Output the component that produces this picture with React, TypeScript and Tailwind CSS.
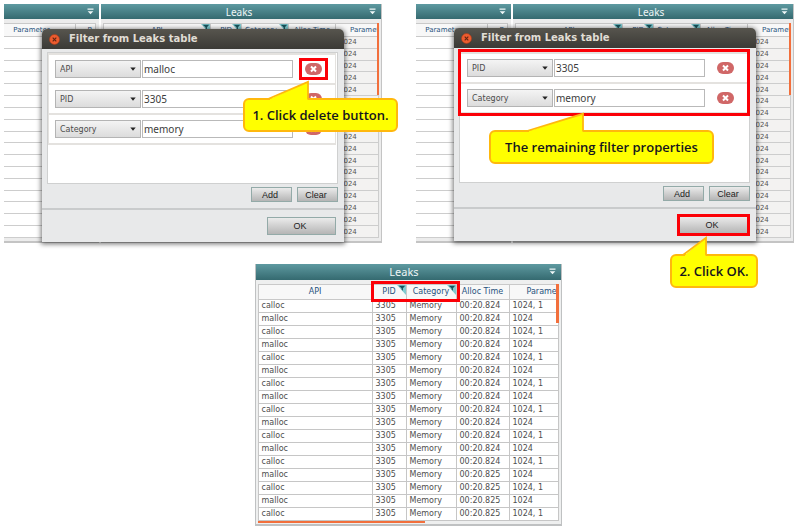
import React from "react";

type Filter = { field: string; value: string };

const ROWS = Array.from({ length: 17 }, (_, i) => ({
  api: i % 2 === 0 ? "calloc" : "malloc",
  time: i < 13 ? "00:20.824" : "00:20.825",
  parameter: i % 2 === 0 ? "1024, 1" : "1024",
}));

function MenuIcon() {
  return (
    <svg viewBox="0 0 7 7" className="h-[7px] w-[7px]" aria-hidden="true">
      <path d="M0.5 0.5h6v1.3h-6zM0.7 3.2h5.6L3.5 6.2z" fill="#eef6f6" />
    </svg>
  );
}

function FunnelMark() {
  return (
    <svg viewBox="0 0 9 10" className="absolute top-0 right-0 h-[10px] w-[9px]" aria-hidden="true">
      <path d="M0 0h9v10z" fill="#7fcad0" />
      <path d="M1.6 0.8h6.6L5.9 3.2v2.6L4.6 4.6V3.2z" fill="#17525a" />
    </svg>
  );
}

function PanelHeader({ title, small }: { title?: string; small?: boolean }) {
  return (
    <header
      className={`relative flex shrink-0 items-center justify-center bg-linear-to-b from-[#5e9aa1] to-[#356a70] font-['Noto_Sans',sans-serif] text-[#eef5f5] ${
        small ? "h-[15px] text-[10px] leading-[14px]" : "h-4 text-[11px] leading-[14px]"
      }`}
    >
      {title && <h2 className={small ? "pr-1" : "pr-2"}>{title}</h2>}
      <button type="button" aria-label="Panel menu" className="absolute top-1 right-[5px]">
        <MenuIcon />
      </button>
    </header>
  );
}

const HEAD = "relative overflow-hidden border border-[#c9c9c9] bg-[#f8f8f8] p-0 font-medium text-[#27527d]";

function BackTable() {
  return (
    <div className="flex h-[239px] gap-[2px]">
      <section className="flex w-[95px] flex-col border-b-2 border-[#c4c4c4] bg-[#ececec]">
        <PanelHeader small />
        <table className="mt-1 mr-[3px] h-[215px] table-fixed border-collapse bg-white font-['DejaVu_Sans',sans-serif] text-[7px] leading-[10px]">
          <colgroup>
            <col />
            <col className="w-5" />
          </colgroup>
          <thead>
            <tr className="h-[13px]">
              <th className={`${HEAD} border-l-0 pr-4`}>Parameter</th>
              <th className={`${HEAD} pl-2`}>P</th>
            </tr>
          </thead>
          <tbody>
            {ROWS.map((_, i) => (
              <tr key={i} className="border-b border-[#cdcdcd]">
                <td className="p-0" />
                <td className="p-0" />
              </tr>
            ))}
          </tbody>
        </table>
      </section>
      <section className="flex min-w-0 flex-1 flex-col border-r border-b-2 border-[#c4c4c4] bg-[#ececec]">
        <PanelHeader title="Leaks" small />
        <div className="relative mx-[2px] mt-1">
          <table className="h-[215px] w-full table-fixed border-collapse bg-[#f3f2f1] font-['DejaVu_Sans',sans-serif] text-[7px] leading-[10px] text-[#555]">
            <colgroup>
              <col />
              <col className="w-[31px]" />
              <col className="w-[47px]" />
              <col className="w-[47px]" />
              <col className="w-[43px]" />
            </colgroup>
            <thead>
              <tr className="h-[13px]">
                <th className={HEAD}>API<FunnelMark /></th>
                <th className={HEAD}>PID<FunnelMark /></th>
                <th className={`${HEAD} pr-2`}>Category<FunnelMark /></th>
                <th className={HEAD}>Alloc Time</th>
                <th className={`${HEAD} pl-[14px] text-left whitespace-nowrap`}>Parameter</th>
              </tr>
            </thead>
            <tbody>
              {ROWS.map((_, i) => (
                <tr key={i}>
                  <td className="border border-[#cdcdcd] p-0" />
                  <td className="border border-[#cdcdcd] p-0" />
                  <td className="border border-[#cdcdcd] p-0" />
                  <td className="border border-[#cdcdcd] p-0" />
                  <td className="border border-[#cdcdcd] py-0 pr-0 pl-[3px]">1024</td>
                </tr>
              ))}
            </tbody>
          </table>
          <div className="absolute top-0 right-0 h-[72px] w-[2px] bg-[#f26f3c]" />
        </div>
      </section>
    </div>
  );
}

function DeleteButton({ label }: { label: string }) {
  return (
    <button type="button" aria-label={label} className="block h-3 w-[17px] rounded-full bg-[#d06767]">
      <svg viewBox="0 0 17 12" className="h-3 w-[17px]" aria-hidden="true">
        <path d="M6 3.5l5 5M11 3.5l-5 5" stroke="#fff" strokeWidth="2" />
      </svg>
    </button>
  );
}

function FilterRow({ filter, marked }: { filter: Filter; marked?: boolean }) {
  return (
    <div className="flex h-[30px] items-center border-b-2 border-[#e4e2df] pl-[6px]">
      <div className="relative w-[86px]">
        <select
          aria-label="Filter field"
          defaultValue={filter.field}
          className="block h-[18px] w-full appearance-none border border-[#b4b4b4] bg-linear-to-b from-[#f4f4f4] to-[#dcdcdc] pt-px pl-1 font-['DejaVu_Sans',sans-serif] text-[8px] leading-[14px] text-[#4c4c4c]"
        >
          <option>API</option>
          <option>PID</option>
          <option>Category</option>
        </select>
        <svg viewBox="0 0 6 4" className="pointer-events-none absolute top-[7px] right-[5px] h-1 w-1.5" aria-hidden="true">
          <path d="M0.3 0.4h5.4L3 3.8z" fill="#222" />
        </svg>
      </div>
      <input
        aria-label="Filter value"
        defaultValue={filter.value}
        className="ml-px h-[18px] min-w-0 flex-1 border border-[#b9b9b9] bg-white pl-px font-['Noto_Sans',sans-serif] text-[10px] leading-4 text-[#3c3c3c]"
      />
      <div className="relative mr-[13px] ml-3">
        <DeleteButton label={`Delete ${filter.field} filter`} />
        {marked && <div className="pointer-events-none absolute -inset-x-[6px] -inset-y-[5px] border-[3px] border-[#fb0007]" />}
      </div>
    </div>
  );
}

const BUTTON =
  "border border-[#93aaa8] bg-linear-to-b from-[#ebebeb] to-[#b5b5b5] pr-[3px] font-['Liberation_Sans',sans-serif] text-[9px] leading-3 text-[#1c1c1c]";

function FilterDialog({ filters, markFirst, markRows, markOk, className }: {
  filters: Filter[];
  markFirst?: boolean;
  markRows?: boolean;
  markOk?: boolean;
  className: string;
}) {
  return (
    <div
      role="dialog"
      aria-label="Filter from Leaks table"
      className={`absolute inset-x-[38px] rounded-t-[5px] bg-[#e8e9ea] shadow-[0_1px_5px_1px_rgba(0,0,0,0.55)] ${className}`}
    >
      <div className="flex h-5 items-center rounded-t-[5px] bg-linear-to-b from-[#57554e] to-[#3b3a36] pl-[7px]">
        <button type="button" aria-label="Close" className="block h-[11px] w-[11px]">
          <svg viewBox="0 0 11 11" className="h-[11px] w-[11px]" aria-hidden="true">
            <circle cx="5.5" cy="5.5" r="5" fill="#ee5c2f" stroke="#a83d1c" strokeWidth="0.6" />
            <path d="M3.7 3.7l3.6 3.6M7.3 3.7L3.7 7.3" stroke="#5f2413" strokeWidth="1.1" />
          </svg>
        </button>
        <h3 className="pl-[9px] font-['DejaVu_Sans',sans-serif] text-[10px] leading-3 font-bold whitespace-nowrap text-[#e0ddd5]">
          Filter from Leaks table
        </h3>
      </div>
      <div className="pt-[3px] pr-[6px] pb-[6px] pl-[5px]">
        <div className="h-[132px] border border-[#cfd0d0] bg-white">
          <div className="relative mr-px border-t-2 border-r border-l border-[#e4e2df]">
            {filters.map((f, i) => (
              <FilterRow key={f.field} filter={f} marked={markFirst && i === 0} />
            ))}
            {markRows && <div className="pointer-events-none absolute -inset-x-[3px] -top-[5px] -bottom-[2px] border-[3px] border-[#fb0007]" />}
          </div>
        </div>
        <div className="mt-[3px] flex justify-end gap-[5px]">
          <button type="button" className={`${BUTTON} h-[15px] w-[41px]`}>Add</button>
          <button type="button" className={`${BUTTON} h-[15px] w-[41px]`}>Clear</button>
        </div>
      </div>
      <div className="flex justify-end border-t-2 border-[#c9cbcc] pt-[7px] pr-[8px] pb-[7px]">
        <div className="relative">
          <button type="button" className={`${BUTTON} block h-[18px] w-[69px]`}>OK</button>
          {markOk && <div className="pointer-events-none absolute -inset-[2px] border-[3px] border-[#fb0007]" />}
        </div>
      </div>
    </div>
  );
}

function Callout({ text, tail, width, className }: { text: string; tail: [number, number]; width: string; className: string }) {
  const [start, tip] = tail;
  return (
    <div className={`absolute h-[34px] ${width} ${className}`}>
      <p className="flex h-full items-center justify-center rounded-[6px] border-2 border-[#ffb80d] bg-[#ffff00] font-['Open_Sans',sans-serif] text-[13px] leading-4 font-semibold whitespace-nowrap text-[#15151f]">
        {text}
      </p>
      <svg width="110" height="21" viewBox="0 0 110 21" className="absolute -top-[18px] left-0" aria-hidden="true">
        <path d={`M${start} 20.5V19L${tip} 1.5V20.5z`} fill="#ffff00" />
        <path d={`M${start - 2} 19L${tip} 1.8V19.5`} fill="none" stroke="#ffb80d" strokeWidth="1.8" />
      </svg>
    </div>
  );
}

function LeaksPanel() {
  const cell = "border border-[#c6c6c6] py-0 pr-0 pl-[3px]";
  return (
    <section className="relative w-[307px] border-x border-b-2 border-[#bfc1c2] bg-[#eeefef]">
      <PanelHeader title="Leaks" />
      <div className="relative mx-[2px] mt-1 mb-px">
        <table className="w-full table-fixed border-collapse bg-white font-['DejaVu_Sans',sans-serif] text-[8px] leading-3 text-[#4d4d4d]">
          <colgroup>
            <col />
            <col className="w-[34px]" />
            <col className="w-[50px]" />
            <col className="w-[53px]" />
            <col className="w-[49px]" />
          </colgroup>
          <thead>
            <tr className="h-[15px]">
              <th className={HEAD}>API</th>
              <th className={HEAD}>PID<FunnelMark /></th>
              <th className={HEAD}>Category<FunnelMark /></th>
              <th className={HEAD}>Alloc Time</th>
              <th className={`${HEAD} pl-[17px] text-left whitespace-nowrap`}>Parameter</th>
            </tr>
          </thead>
          <tbody>
            {ROWS.map((r, i) => (
              <tr key={i} className="h-[13px]">
                <td className={cell}>{r.api}</td>
                <td className={cell}>3305</td>
                <td className={cell}>Memory</td>
                <td className={cell}>{r.time}</td>
                <td className={cell}>{r.parameter}</td>
              </tr>
            ))}
          </tbody>
        </table>
        <div className="absolute top-0 right-0 h-[39px] w-[3px] bg-[#f26f3c]" />
        <div className="h-[2px] w-[167px] bg-[#f26f3c]" />
      </div>
      <div className="pointer-events-none absolute top-[17px] left-[115px] h-[21px] w-[89px] border-[3px] border-[#fb0007]" />
    </section>
  );
}

export default function App() {
  return (
    <main className="bg-white pt-1 pr-1.5 pl-1">
      <div className="grid grid-cols-2 gap-[34px]">
        <div className="relative">
          <BackTable />
          <FilterDialog
            className="top-[25px]"
            markFirst
            filters={[
              { field: "API", value: "malloc" },
              { field: "PID", value: "3305" },
              { field: "Category", value: "memory" },
            ]}
          />
          <Callout text="1. Click delete button." tail={[27, 65]} width="w-[155px]" className="top-[94px] left-[239px]" />
        </div>
        <div className="relative">
          <BackTable />
          <FilterDialog
            className="top-6"
            markRows
            markOk
            filters={[
              { field: "PID", value: "3305" },
              { field: "Category", value: "memory" },
            ]}
          />
          <Callout text="The remaining filter properties" tail={[40, 94]} width="w-[225px]" className="top-[126px] left-[73px]" />
          <Callout text="2. Click OK." tail={[15, 36]} width="w-[88px]" className="top-[250px] left-[254px]" />
        </div>
      </div>
      <div className="mt-[21px] flex justify-center pl-[18px]">
        <LeaksPanel />
      </div>
    </main>
  );
}
